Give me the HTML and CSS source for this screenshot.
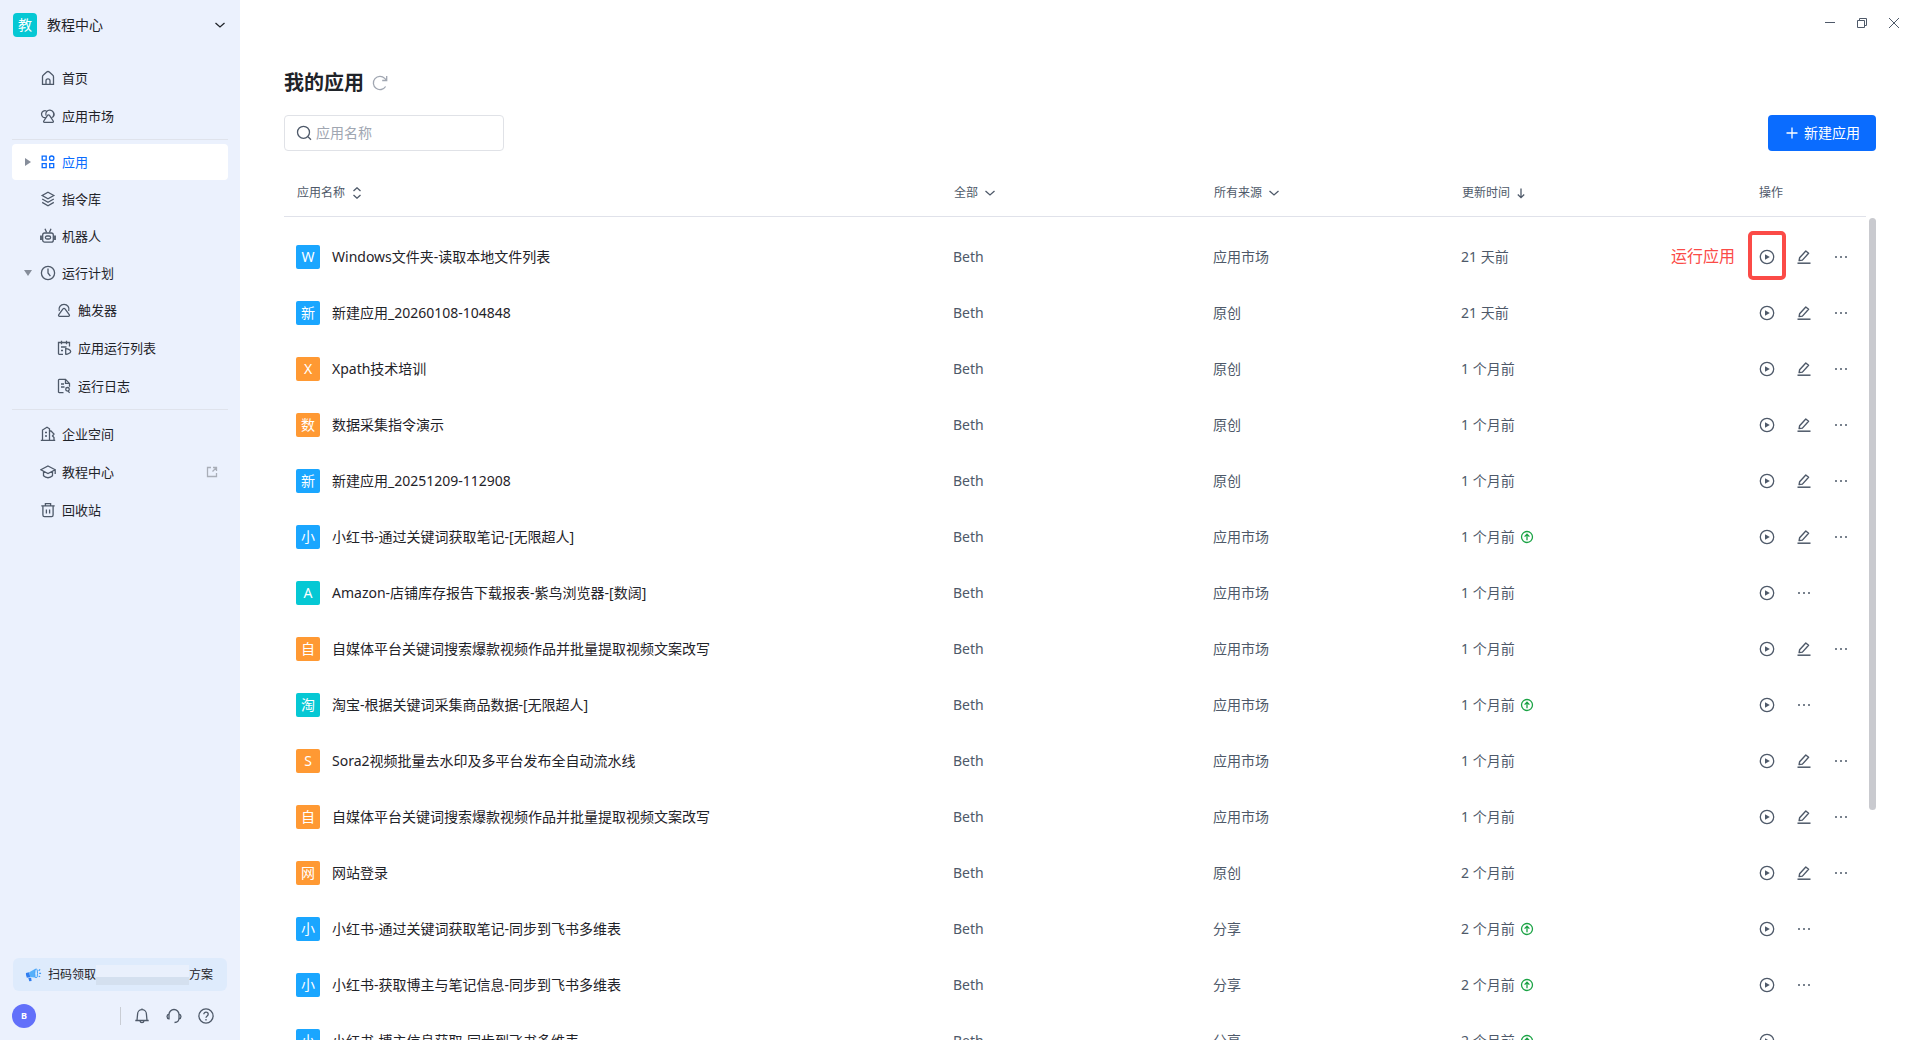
FILE: index.html
```html
<!DOCTYPE html>
<html lang="zh-CN">
<head>
<meta charset="utf-8">
<title>我的应用</title>
<link rel="stylesheet" href="styles.css">
</head>
<body>
<svg class="sprite" aria-hidden="true">
  <symbol id="play" viewBox="0 0 16 16"><circle cx="8" cy="8" r="6.7" fill="none" stroke="currentColor" stroke-width="1.3"/><path d="M6 5.2v5.6L10.8 8z" fill="currentColor"/></symbol>
  <symbol id="edit" viewBox="0 0 16 16"><path d="M3.6 8.8 9.800 2l2.800 2.300-6.200 6.800-3.300.5z" fill="none" stroke="currentColor" stroke-width="1.4" stroke-linejoin="round"/><path d="M1.500 14.200h13" stroke="currentColor" stroke-width="1.500"/></symbol>
  <symbol id="more" viewBox="0 0 16 16"><path d="M2 7.2h2v1.6H2zM7 7.2h2v1.6H7zM12 7.2h2v1.6h-2z" fill="currentColor"/></symbol>
  <symbol id="up" viewBox="0 0 14 14"><circle cx="7" cy="7" r="5.5" fill="none" stroke="currentColor" stroke-width="1.3"/><path d="M7 10.3V4.4M4.6 6.6 7 4.2l2.4 2.4" fill="none" stroke="currentColor" stroke-width="1.3"/></symbol>
  <symbol id="chevron" viewBox="0 0 12 12"><path d="M1.500 4 6 8l4.500-4" fill="none" stroke="currentColor" stroke-width="1.3"/></symbol>
</svg>
<div class="app">
  <aside class="sidebar">
    <button class="workspace" type="button">
      <span class="workspace-logo">教</span>
      <span class="workspace-name">教程中心</span>
      <svg class="icon-sm"><use href="#chevron"/></svg>
    </button>
    <nav class="nav">
      <div class="nav-group nav-top">
        <a class="nav-item" href="#"><svg class="icon" viewBox="0 0 16 16"><path d="M2.500 6.800c0-.8.3-1.300.9-1.800l3.300-2.900c.8-.7 1.800-.7 2.600 0L12.600 5c.6.500.9 1 .9 1.800v7.500h-11zM6 14.200v-3.400a2 2 0 0 1 4 0v3.400"/></svg>首页</a>
        <a class="nav-item" href="#"><svg class="icon" viewBox="0 0 16 16"><path d="M5.300 9.700A3.500 3.500 0 1 1 6.400 3M6 7.500A4 4 0 1 1 13.300 8M11.800 9.500a3.300 3.300 0 0 0 1.800-5M8.500 6.800c.5 0 .8.300 1 .6l3.700 5.600c.5.800.1 1.400-.7 1.400h-8c-.8 0-1.200-.6-.7-1.400l3.700-5.600c.2-.3.500-.6 1-.6z"/></svg>应用市场</a>
      </div>
      <div class="nav-group">
        <a class="nav-item is-active" href="#"><span class="caret caret-right"></span><svg class="icon" viewBox="0 0 16 16"><path d="M2.200 2.200h4v4h-4zM2.200 9.700h4v4h-4zM9.700 9.700h4v4h-4z"/><circle cx="11.700" cy="4.200" r="2.200"/></svg>应用</a>
        <a class="nav-item" href="#"><svg class="icon" viewBox="0 0 16 16"><path d="M8 1.200 13.800 4.500 8 7.800 2.200 4.500zM2.200 8 8 11.300 13.800 8M2.200 11.400 8 14.700l5.800-3.300"/></svg>指令库</a>
        <a class="nav-item" href="#"><svg class="icon" viewBox="0 0 16 16"><rect x="2.700" y="5" width="10.600" height="9.200" rx="2"/><rect x="5.400" y="8" width="5.200" height="3" rx="1.500"/><path d="M5 .8 6.600 4.600M11 .8 9.400 4.600"/><path d="M1 7.500v4.500M15 7.500v4.500" stroke-width="1.800"/></svg>机器人</a>
        <a class="nav-item" href="#"><span class="caret caret-down"></span><svg class="icon" viewBox="0 0 16 16"><circle cx="8" cy="8" r="6.600"/><path d="M8 3.600V8l2.400 3.200"/></svg>运行计划</a>
        <div class="nav-sub">
          <a class="nav-item" href="#"><svg class="icon" viewBox="0 0 16 16"><path d="M3.300 9A5 5 0 1 1 12.700 9M8 6.400c.5 0 .8.200 1 .5l4.200 5.800c.6.800.1 1.600-.8 1.600H3.600c-.9 0-1.400-.8-.8-1.600L7 6.900c.2-.3.500-.5 1-.5z"/></svg>触发器</a>
          <a class="nav-item" href="#"><svg class="icon" viewBox="0 0 16 16"><path d="M7 14.300H3.200c-.4 0-.7-.3-.7-.7V2.500h11v4M5.500.8v3.400M10.500.8v3.400M5 7h5.500M5 10.500h2M9.700 8.600v5.600c1.500.3 5-1.300 5-2.800s-3.500-3.100-5-2.800z"/></svg>应用运行列表</a>
          <a class="nav-item" href="#"><svg class="icon" viewBox="0 0 16 16"><path d="M7.500 14.600H3.200c-.4 0-.7-.3-.7-.7V2.100c0-.4.300-.7.700-.7h6.300l4 4v3.400M9.500 1.400v4h4M5 6h3M5 9h3.500M13.600 14.800l-1.400-1.700"/><circle cx="11.500" cy="11.300" r="1.800"/></svg>运行日志</a>
        </div>
      </div>
      <div class="nav-group nav-bottom">
        <a class="nav-item" href="#"><svg class="icon" viewBox="0 0 16 16"><path d="M.8 14.300h14.400M2.500 14V4L7 1.300l2.500 1.500V14M5 6.500h2M5 10h2M9.500 5h1.500l3 3-1.500 2 1.500 1.500V14"/></svg>企业空间</a>
        <a class="nav-item" href="#"><svg class="icon" viewBox="0 0 16 16"><path d="M8 2 15.200 5.800 8 9.600.8 5.800zM3.500 7.500v4.300c2.500 2.600 6.500 2.600 9 0V7.500M15.200 6v4"/></svg>教程中心<svg class="icon-sm external" viewBox="0 0 12 12"><path d="M5 1.500H1.500v9h9V7M7 1.500h3.500V5M10.500 1.500 6.500 5.500"/></svg></a>
        <a class="nav-item" href="#"><svg class="icon" viewBox="0 0 16 16"><path d="M1.300 3.800h13.400M5.400 3.500V1.600h5.200v1.900M2.900 4v9c0 .9.600 1.600 1.500 1.600h7.200c.9 0 1.500-.7 1.500-1.600V4M6.400 7.500v4M9.600 7.500v4"/></svg>回收站</a>
      </div>
    </nav>
    <div class="sidebar-foot">
      <a class="promo" href="#">
        <svg class="promo-icon" viewBox="0 0 18 16"><path d="M1 6 4.500 5l1 5.200L2 10.800Q.6 8.500 1 6z" fill="#2f7df0"/><path d="M4.500 5 11 1.500l1.500 9.500-7-.8z" fill="#55b0fa"/><path d="M3.500 10.800l3 .2.500 3.300-2.500.2z" fill="#2f7df0"/><ellipse cx="11.800" cy="6.300" rx="1.500" ry="4.900" fill="#d3ebff" stroke="#3e9cf7"/><path d="M14.500 3.500l1.500-1.500M15 6.300h2M14.500 9l1.500 1" stroke="#3e9cf7" stroke-width="1.200"/></svg>
        <span>扫码领取</span><span class="promo-mask"></span><span>方案</span>
      </a>
      <div class="tools">
        <button class="avatar" type="button">B</button>
        <span class="tools-line"></span>
        <button class="icon-btn" type="button" aria-label="通知"><svg class="icon" viewBox="0 0 16 16"><path d="M1.300 12.500h13.400M3 12.300 3.600 6A4.400 4.400 0 0 1 12.400 6l.6 6.300M8 .4v1.400M6 13c.3 2.200 3.700 2.200 4 0"/></svg></button>
        <button class="icon-btn" type="button" aria-label="客服"><svg class="icon" viewBox="0 0 16 16"><path d="M3 6.500a5 5 0 0 1 10 0v3.500c0 2.500-1.500 4.500-4.500 4.500M3 6.200C.4 6.500.4 10.500 3 10.800zM13 6.200c2.600.3 2.600 4.300 0 4.600z"/></svg></button>
        <button class="icon-btn" type="button" aria-label="帮助"><svg class="icon" viewBox="0 0 16 16"><circle cx="8" cy="8" r="7.100"/><path d="M5.800 6.300c0-3 4.400-2.800 4.400-.1C10.200 8 8 7.800 8 9.800M8 11v1.500"/></svg></button>
      </div>
    </div>
  </aside>
  <main class="main">
    <div class="window-bar">
      <button class="win-btn" type="button" aria-label="最小化"><svg class="icon-sm" viewBox="0 0 12 12"><path d="M1 5.500h10"/></svg></button>
      <button class="win-btn" type="button" aria-label="还原"><svg class="icon-sm" viewBox="0 0 12 12"><path d="M1.500 3.500h7v7h-7zM3.500 3.500v-2h7v7h-2"/></svg></button>
      <button class="win-btn" type="button" aria-label="关闭"><svg class="icon-sm" viewBox="0 0 12 12"><path d="M1 1l10 10M11 1 1 11"/></svg></button>
    </div>
    <header class="title-row">
      <h1 class="title">我的应用</h1>
      <button class="icon-btn refresh" type="button" aria-label="刷新"><svg class="icon" viewBox="0 0 16 16"><path d="M13.600 11.500A6.600 6.600 0 1 1 12.700 3.400L14.500 5M14.700 1v4.500h-4.500"/></svg></button>
    </header>
    <div class="toolbar">
      <label class="search">
        <svg class="icon" viewBox="0 0 16 16"><circle cx="7.500" cy="7.300" r="6"/><path d="M12 11.800l3 3"/></svg>
        <input class="search-input" type="text" placeholder="应用名称" aria-label="应用名称">
      </label>
      <button class="create" type="button"><svg class="icon-sm" viewBox="0 0 12 12"><path d="M6 .5v11M.5 6h11"/></svg>新建应用</button>
    </div>
    <div class="list">
      <table class="table">
        <colgroup><col><col class="col-owner"><col class="col-source"><col class="col-time"><col class="col-ops"></colgroup>
        <thead>
          <tr>
            <th scope="col"><button class="head-btn" type="button">应用名称<svg class="icon-sm" viewBox="0 0 12 12"><path d="M2.500 4 6 .8 9.500 4M2.500 8 6 11.200 9.500 8"/></svg></button></th>
            <th scope="col"><button class="head-btn" type="button">全部<svg class="icon-sm"><use href="#chevron"/></svg></button></th>
            <th scope="col"><button class="head-btn" type="button">所有来源<svg class="icon-sm"><use href="#chevron"/></svg></button></th>
            <th scope="col"><button class="head-btn" type="button">更新时间<svg class="icon-sm arrow" viewBox="0 0 12 12"><path d="M5 1.500v9M1.800 7.500 5 10.700l3.200-3.200"/></svg></button></th>
            <th scope="col">操作</th>
          </tr>
        </thead>
        <tbody>
          <tr><td><div class="name"><span class="badge blue">W</span>Windows文件夹-读取本地文件列表</div></td><td>Beth</td><td>应用市场</td><td>21 天前</td><td><div class="ops"><span class="callout">运行应用</span><span class="callout-box"></span><button class="icon-btn" type="button" aria-label="运行"><svg class="icon"><use href="#play"/></svg></button><button class="icon-btn" type="button" aria-label="编辑"><svg class="icon"><use href="#edit"/></svg></button><button class="icon-btn" type="button" aria-label="更多"><svg class="icon"><use href="#more"/></svg></button></div></td></tr>
          <tr><td><div class="name"><span class="badge blue">新</span>新建应用_20260108-104848</div></td><td>Beth</td><td>原创</td><td>21 天前</td><td><div class="ops"><button class="icon-btn" type="button" aria-label="运行"><svg class="icon"><use href="#play"/></svg></button><button class="icon-btn" type="button" aria-label="编辑"><svg class="icon"><use href="#edit"/></svg></button><button class="icon-btn" type="button" aria-label="更多"><svg class="icon"><use href="#more"/></svg></button></div></td></tr>
          <tr><td><div class="name"><span class="badge orange">X</span>Xpath技术培训</div></td><td>Beth</td><td>原创</td><td>1 个月前</td><td><div class="ops"><button class="icon-btn" type="button" aria-label="运行"><svg class="icon"><use href="#play"/></svg></button><button class="icon-btn" type="button" aria-label="编辑"><svg class="icon"><use href="#edit"/></svg></button><button class="icon-btn" type="button" aria-label="更多"><svg class="icon"><use href="#more"/></svg></button></div></td></tr>
          <tr><td><div class="name"><span class="badge orange">数</span>数据采集指令演示</div></td><td>Beth</td><td>原创</td><td>1 个月前</td><td><div class="ops"><button class="icon-btn" type="button" aria-label="运行"><svg class="icon"><use href="#play"/></svg></button><button class="icon-btn" type="button" aria-label="编辑"><svg class="icon"><use href="#edit"/></svg></button><button class="icon-btn" type="button" aria-label="更多"><svg class="icon"><use href="#more"/></svg></button></div></td></tr>
          <tr><td><div class="name"><span class="badge blue">新</span>新建应用_20251209-112908</div></td><td>Beth</td><td>原创</td><td>1 个月前</td><td><div class="ops"><button class="icon-btn" type="button" aria-label="运行"><svg class="icon"><use href="#play"/></svg></button><button class="icon-btn" type="button" aria-label="编辑"><svg class="icon"><use href="#edit"/></svg></button><button class="icon-btn" type="button" aria-label="更多"><svg class="icon"><use href="#more"/></svg></button></div></td></tr>
          <tr><td><div class="name"><span class="badge blue">小</span>小红书-通过关键词获取笔记-[无限超人]</div></td><td>Beth</td><td>应用市场</td><td><div class="time">1 个月前<svg class="update"><use href="#up"/></svg></div></td><td><div class="ops"><button class="icon-btn" type="button" aria-label="运行"><svg class="icon"><use href="#play"/></svg></button><button class="icon-btn" type="button" aria-label="编辑"><svg class="icon"><use href="#edit"/></svg></button><button class="icon-btn" type="button" aria-label="更多"><svg class="icon"><use href="#more"/></svg></button></div></td></tr>
          <tr><td><div class="name"><span class="badge teal">A</span>Amazon-店铺库存报告下载报表-紫鸟浏览器-[数阔]</div></td><td>Beth</td><td>应用市场</td><td>1 个月前</td><td><div class="ops"><button class="icon-btn" type="button" aria-label="运行"><svg class="icon"><use href="#play"/></svg></button><button class="icon-btn" type="button" aria-label="更多"><svg class="icon"><use href="#more"/></svg></button></div></td></tr>
          <tr><td><div class="name"><span class="badge orange">自</span>自媒体平台关键词搜索爆款视频作品并批量提取视频文案改写</div></td><td>Beth</td><td>应用市场</td><td>1 个月前</td><td><div class="ops"><button class="icon-btn" type="button" aria-label="运行"><svg class="icon"><use href="#play"/></svg></button><button class="icon-btn" type="button" aria-label="编辑"><svg class="icon"><use href="#edit"/></svg></button><button class="icon-btn" type="button" aria-label="更多"><svg class="icon"><use href="#more"/></svg></button></div></td></tr>
          <tr><td><div class="name"><span class="badge teal">淘</span>淘宝-根据关键词采集商品数据-[无限超人]</div></td><td>Beth</td><td>应用市场</td><td><div class="time">1 个月前<svg class="update"><use href="#up"/></svg></div></td><td><div class="ops"><button class="icon-btn" type="button" aria-label="运行"><svg class="icon"><use href="#play"/></svg></button><button class="icon-btn" type="button" aria-label="更多"><svg class="icon"><use href="#more"/></svg></button></div></td></tr>
          <tr><td><div class="name"><span class="badge orange">S</span>Sora2视频批量去水印及多平台发布全自动流水线</div></td><td>Beth</td><td>应用市场</td><td>1 个月前</td><td><div class="ops"><button class="icon-btn" type="button" aria-label="运行"><svg class="icon"><use href="#play"/></svg></button><button class="icon-btn" type="button" aria-label="编辑"><svg class="icon"><use href="#edit"/></svg></button><button class="icon-btn" type="button" aria-label="更多"><svg class="icon"><use href="#more"/></svg></button></div></td></tr>
          <tr><td><div class="name"><span class="badge orange">自</span>自媒体平台关键词搜索爆款视频作品并批量提取视频文案改写</div></td><td>Beth</td><td>应用市场</td><td>1 个月前</td><td><div class="ops"><button class="icon-btn" type="button" aria-label="运行"><svg class="icon"><use href="#play"/></svg></button><button class="icon-btn" type="button" aria-label="编辑"><svg class="icon"><use href="#edit"/></svg></button><button class="icon-btn" type="button" aria-label="更多"><svg class="icon"><use href="#more"/></svg></button></div></td></tr>
          <tr><td><div class="name"><span class="badge orange">网</span>网站登录</div></td><td>Beth</td><td>原创</td><td>2 个月前</td><td><div class="ops"><button class="icon-btn" type="button" aria-label="运行"><svg class="icon"><use href="#play"/></svg></button><button class="icon-btn" type="button" aria-label="编辑"><svg class="icon"><use href="#edit"/></svg></button><button class="icon-btn" type="button" aria-label="更多"><svg class="icon"><use href="#more"/></svg></button></div></td></tr>
          <tr><td><div class="name"><span class="badge blue">小</span>小红书-通过关键词获取笔记-同步到飞书多维表</div></td><td>Beth</td><td>分享</td><td><div class="time">2 个月前<svg class="update"><use href="#up"/></svg></div></td><td><div class="ops"><button class="icon-btn" type="button" aria-label="运行"><svg class="icon"><use href="#play"/></svg></button><button class="icon-btn" type="button" aria-label="更多"><svg class="icon"><use href="#more"/></svg></button></div></td></tr>
          <tr><td><div class="name"><span class="badge blue">小</span>小红书-获取博主与笔记信息-同步到飞书多维表</div></td><td>Beth</td><td>分享</td><td><div class="time">2 个月前<svg class="update"><use href="#up"/></svg></div></td><td><div class="ops"><button class="icon-btn" type="button" aria-label="运行"><svg class="icon"><use href="#play"/></svg></button><button class="icon-btn" type="button" aria-label="更多"><svg class="icon"><use href="#more"/></svg></button></div></td></tr>
          <tr><td><div class="name"><span class="badge blue">小</span>小红书-博主信息获取-同步到飞书多维表</div></td><td>Beth</td><td>分享</td><td><div class="time">2 个月前<svg class="update"><use href="#up"/></svg></div></td><td><div class="ops"><button class="icon-btn" type="button" aria-label="运行"><svg class="icon"><use href="#play"/></svg></button><button class="icon-btn" type="button" aria-label="更多"><svg class="icon"><use href="#more"/></svg></button></div></td></tr>
        </tbody>
      </table>
      <div class="scroll-track"><div class="scroll-thumb"></div></div>
    </div>
  </main>
</div>
</body>
</html>
```
FILE: styles.css
```css
* { box-sizing: border-box; }

body {
  margin: 0;
  font: 14px/20px "Noto Sans", "Noto Sans CJK SC", sans-serif;
  color: #1f2329;
  background: #fff;
}

button, input { font: inherit; color: inherit; }
button { padding: 0; border: 0; background: none; }
a { color: inherit; text-decoration: none; }

.sprite { display: none; }
.icon { width: 16px; height: 16px; flex: none; }
.icon-sm { width: 12px; height: 12px; flex: none; }
.icon, .icon-sm { display: block; fill: none; stroke: currentColor; stroke-width: 1.3; }
.icon use, .icon-sm use { stroke: none; }
.icon-btn { display: flex; color: #4e5969; }

.app { display: flex; height: 100vh; overflow: hidden; }

/* Sidebar */
.sidebar {
  flex: none;
  width: 240px;
  display: flex;
  flex-direction: column;
  padding: 13px 12px 12px;
  background: #ebf1fd;
}
.workspace { display: flex; align-items: center; gap: 10px; height: 24px; padding: 0 2px 0 1px; }
.workspace-logo {
  width: 24px;
  border-radius: 4px;
  line-height: 24px;
  color: #fff;
  background: #06c8d4;
}
.workspace-name { flex: 1; text-align: left; }

.nav { flex: 1; padding-top: 23px; font-size: 13px; }
.nav-group { display: flex; flex-direction: column; gap: 1px; }
.nav-top, .nav-bottom { gap: 2px; }
.nav-group + .nav-group { margin-top: 5px; padding-top: 4px; border-top: 1px solid #dfe3ec; }
.nav-group + .nav-bottom { padding-top: 6px; }
.nav-sub { display: flex; flex-direction: column; gap: 2px; }
.nav-item {
  position: relative;
  display: flex;
  align-items: center;
  gap: 6px;
  height: 36px;
  padding: 0 10px 0 28px;
  border-radius: 4px;
}
.nav-sub .nav-item { padding-left: 44px; }
.nav-item .icon { color: #4e5969; }
.nav-item.is-active, .nav-item.is-active .icon { color: #0a6cff; }
.nav-item.is-active { background: #fff; }
.nav-item .external { margin-left: auto; color: #a9aeb8; }
.caret { position: absolute; left: 13px; border: 4px solid transparent; }
.caret-right { border-left: 6px solid #868d9a; border-right: 0; }
.caret-down { left: 12px; border-top: 6px solid #868d9a; border-bottom: 0; }

.promo {
  display: flex;
  align-items: center;
  height: 33px;
  margin: 0 1px;
  padding: 0 14px 0 12px;
  border-radius: 6px;
  font-size: 12px;
  background: #deebfc;
}
.promo-icon { width: 17px; height: 16px; margin-right: 6px; }
.promo-mask { flex: 1; height: 20px; background: linear-gradient(#e9f0fc 60%, #d4e0ef 60%); }
.tools { display: flex; align-items: center; gap: 16px; margin-top: 13px; padding-right: 14px; }
.avatar {
  width: 24px;
  height: 24px;
  margin-right: auto;
  border-radius: 50%;
  font-size: 9px;
  font-weight: 700;
  color: #fff;
  background: #6270fa;
}
.tools-line { width: 1px; height: 18px; margin-right: -3px; background: #c9cdd4; }

/* Main area */
.main {
  flex: 1;
  min-width: 0;
  display: flex;
  flex-direction: column;
  padding-left: 44px;
}
.window-bar { display: flex; justify-content: flex-end; gap: 20px; padding: 17px 20px 0; color: #4e5969; }
.window-bar .icon-sm { stroke-width: 1; }
.title-row { display: flex; align-items: center; gap: 8px; margin-top: 38px; }
.title { margin: 0; font-size: 20px; line-height: 32px; font-weight: 700; }
.refresh { color: #a0a6b1; }

.toolbar { display: flex; justify-content: space-between; margin-top: 16px; padding-right: 44px; }
.search {
  display: flex;
  align-items: center;
  gap: 4px;
  width: 220px;
  height: 36px;
  padding: 0 11px;
  border: 1px solid #e0e2e7;
  border-radius: 4px;
  color: #4e5969;
}
.search-input { flex: 1; min-width: 0; padding: 0; border: 0; outline: 0; background: none; }
.search-input::placeholder { color: #a0a6b1; }
.create {
  display: flex;
  align-items: center;
  gap: 6px;
  height: 36px;
  padding: 0 16px 0 18px;
  border-radius: 4px;
  color: #fff;
  background: #0a6cff;
}

/* Application table */
.list { position: relative; flex: 1; min-height: 0; margin-top: 16px; padding-right: 54px; overflow: hidden; }
.table { width: 100%; table-layout: fixed; border-collapse: separate; border-spacing: 0; color: #4e5969; }
.col-owner { width: 260px; }
.col-source { width: 248px; }
.col-time { width: 298px; }
.col-ops { width: 119px; }
.table th {
  height: 50px;
  padding: 2px 12px 0;
  border-bottom: 1px solid #e0e2ea;
  text-align: left;
  font-size: 12px;
  font-weight: 400;
}
.table tbody::before { content: ""; display: block; height: 12px; }
.table td { height: 56px; padding: 0 12px; white-space: nowrap; }
.head-btn { display: flex; align-items: center; gap: 6px; padding-left: 1px; }
.name { display: flex; align-items: center; gap: 12px; color: #1f2329; }
.badge { width: 24px; border-radius: 2px; line-height: 24px; text-align: center; color: #fff; }
.blue { background: #1aa6ff; }
.orange { background: #ff9933; }
.teal { background: #06c8d4; }
.time { display: flex; align-items: center; gap: 5px; }
.update { width: 14px; height: 14px; color: #1ba345; }
.ops { position: relative; display: flex; gap: 21px; }

/* Callout on the run button */
.callout {
  position: absolute;
  top: -3px;
  right: 119px;
  font-size: 16px;
  color: #fb4b47;
}
.callout-box {
  position: absolute;
  top: -18px;
  left: -11px;
  width: 38px;
  height: 49px;
  border: 4px solid #fb4b47;
  border-radius: 5px;
}

.scroll-track { position: absolute; top: 51px; right: 44px; bottom: 0; width: 7px; }
.scroll-thumb { height: 72%; border-radius: 4px; background: #c9cacf; }
```
